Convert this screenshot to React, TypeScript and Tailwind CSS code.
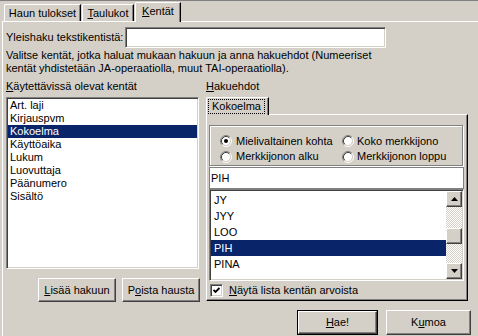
import * as React from 'react';

const sunken =
  'border border-t-[#808080] border-l-[#808080] border-b-white border-r-white shadow-[inset_1px_1px_0_#404040,inset_-1px_-1px_0_#d4d0c8]';
const raised =
  'border border-t-white border-l-white border-b-[#404040] border-r-[#404040] shadow-[inset_-1px_-1px_0_#808080] bg-[#d4d0c8]';
const checker = 'bg-[repeating-conic-gradient(#ffffff_0_25%,#d4d0c8_0_50%)] bg-[length:2px_2px]';

const Radio = ({ checked }: { checked?: boolean }) => (
  <svg width="12" height="12" viewBox="0 0 12 12" className="shrink-0">
    <circle cx="6" cy="6" r="4.2" fill="#fff" />
    <path d="M2.11 9.89 A5.5 5.5 0 0 1 9.89 2.11" stroke="#808080" fill="none" />
    <path d="M9.89 2.11 A5.5 5.5 0 0 1 2.11 9.89" stroke="#fff" fill="none" />
    <path d="M2.82 9.18 A4.5 4.5 0 0 1 9.18 2.82" stroke="#404040" fill="none" />
    <path d="M9.18 2.82 A4.5 4.5 0 0 1 2.82 9.18" stroke="#d4d0c8" fill="none" />
    {checked && <circle cx="6" cy="6" r="2" fill="#000" />}
  </svg>
);

const Arrow = ({ up }: { up?: boolean }) => (
  <svg width="7" height="4" viewBox="0 0 7 4">
    <path d={up ? 'M3.5 0 L7 4 L0 4 Z' : 'M0 0 L7 0 L3.5 4 Z'} fill="#000" />
  </svg>
);

const fields = ['Art. laji', 'Kirjauspvm', 'Kokoelma', 'Käyttöaika', 'Lukum', 'Luovuttaja', 'Päänumero', 'Sisältö'];
const values = ['JY', 'JYY', 'LOO', 'PIH', 'PINA'];

export default function App() {
  return (
    <div className="w-[478px] h-[336px] overflow-hidden bg-[#d4d0c8] border-t border-[#808080] flex flex-col font-['Liberation_Sans',Arial,sans-serif] text-[11px] leading-[13px] text-black">
      {/* Tabs */}
      <div className="flex items-end h-[20px] pl-[4px]">
        <div className="w-[77px] h-[17px] border-t border-l border-white border-r border-r-black shadow-[inset_-1px_0_0_#808080] rounded-tl-[2px] flex items-center justify-center">
          Haun tulokset
        </div>
        <div className="ml-[1px] w-[52px] h-[17px] border-t border-l border-white border-r border-r-black shadow-[inset_-1px_0_0_#808080] rounded-tl-[2px] flex items-center justify-center">
          <span><u>T</u>aulukot</span>
        </div>
        <div className="ml-[1px] relative z-10 -mb-px w-[46px] h-[20px] bg-[#d4d0c8] border-t border-l border-white border-r border-r-black shadow-[inset_-1px_0_0_#808080] rounded-tl-[2px] flex justify-center pt-[2px]">
          <span><u>K</u>entät</span>
        </div>
      </div>

      {/* Panel */}
      <div className="ml-[2px] flex-1 border-t border-l border-white pl-[3px]">
        <div className="flex items-center h-[21px] mt-[5px]">
          <div className="w-[119px]">Yleishaku tekstikentistä:</div>
          <div className={`w-[261px] h-[21px] bg-white ${sunken}`} />
        </div>
        <p className="mt-[1px]">
          Valitse kentät, jotka haluat mukaan hakuun ja anna hakuehdot (Numeeriset
          <br />
          kentät yhdistetään JA-operaatiolla, muut TAI-operaatiolla).
        </p>

        <div className="flex mt-[5px]">
          {/* left column */}
          <div className="w-[194px] flex flex-col">
            <div className="h-[13px]">
              <u>K</u>äytettävissä olevat kentät
            </div>
            <div className={`mt-[4px] w-[193px] h-[172px] bg-white p-[1px] ${sunken}`}>
              {fields.map((f) => (
                <div
                  key={f}
                  className={`h-[13px] pl-[2px] ${f === 'Kokoelma' ? 'bg-[#0a246a] text-white' : ''}`}
                >
                  {f}
                </div>
              ))}
            </div>
            <div className="flex justify-end gap-[6px] mt-[9px]">
              <button className={`w-[78px] h-[24px] ${raised}`}>
                <u>L</u>isää hakuun
              </button>
              <button className={`w-[78px] h-[24px] ${raised}`}>
                P<u>o</u>ista hausta
              </button>
            </div>
          </div>

          {/* right column */}
          <div className="ml-[6px] w-[262px] flex flex-col">
            <div className="h-[13px]">
              <u>H</u>akuehdot
            </div>
            <div className="mt-[4px] relative z-10 -mb-px w-[63px] h-[18px] bg-[#d4d0c8] border-t border-l border-white border-r border-r-black shadow-[inset_-1px_0_0_#808080] rounded-tl-[2px]">
              <div className="mt-[1px] ml-[1px] w-[57px] h-[15px] border border-dotted border-black flex items-center justify-center">
                Kokoelma
              </div>
            </div>
            <div className="w-[262px] h-[187px] border-t border-l border-white border-r border-b border-r-black border-b-black shadow-[inset_-1px_-1px_0_#808080] pt-[10px] pl-[2px]">
              <div className="w-[254px] h-[41px] border border-[#808080] shadow-[inset_1px_1px_0_#fff,1px_1px_0_#fff] pt-[8px] pl-[10px] grid grid-cols-[122px_1fr]">
                <div className="flex items-center gap-[4px] h-[14px]">
                  <Radio checked /> Mielivaltainen kohta
                </div>
                <div className="flex items-center gap-[3px] h-[14px]">
                  <Radio /> Koko merkkijono
                </div>
                <div className="flex items-center gap-[4px] h-[14px]">
                  <Radio /> Merkkijonon alku
                </div>
                <div className="flex items-center gap-[3px] h-[14px]">
                  <Radio /> Merkkijonon loppu
                </div>
              </div>
              <div className="mt-[1px] w-[255px] h-[22px] bg-white border border-[#808080] pl-[1px] flex items-center">
                PIH
              </div>
              <div className={`w-[255px] h-[92px] bg-white p-[1px] flex ${sunken}`}>
                <div className="flex-1 pt-[1px]">
                  {values.map((v) => (
                    <div
                      key={v}
                      className={`h-[16px] pl-[3px] flex items-center ${v === 'PIH' ? 'bg-[#0a246a] text-white' : ''}`}
                    >
                      {v}
                    </div>
                  ))}
                </div>
                <div className="w-[16px] flex flex-col">
                  <div className={`h-[16px] flex items-center justify-center ${raised}`}>
                    <Arrow up />
                  </div>
                  <div className={`h-[21px] ${checker}`} />
                  <div className={`h-[16px] ${raised}`} />
                  <div className={`flex-1 ${checker}`} />
                  <div className={`h-[16px] flex items-center justify-center ${raised}`}>
                    <Arrow />
                  </div>
                </div>
              </div>
              <div className="mt-[3px] ml-[1px] flex items-center gap-[6px]">
                <div className={`w-[13px] h-[13px] bg-white flex items-center justify-center ${sunken}`}>
                  <svg width="7" height="7" viewBox="0 0 7 7">
                    <path d="M0.5 3 L2.5 5 L6.5 1" stroke="#000" strokeWidth="1.8" fill="none" />
                  </svg>
                </div>
                <span>
                  <u>N</u>äytä lista kentän arvoista
                </span>
              </div>
            </div>
          </div>
        </div>

        <div className="flex justify-end gap-[8px] pr-[7px] mt-[8px]">
          <div className="border border-black">
            <button className={`w-[79px] h-[23px] ${raised}`}>
              <u>H</u>ae!
            </button>
          </div>
          <button className={`w-[85px] h-[25px] ${raised}`}>
            K<u>u</u>moa
          </button>
        </div>
      </div>
    </div>
  );
}
